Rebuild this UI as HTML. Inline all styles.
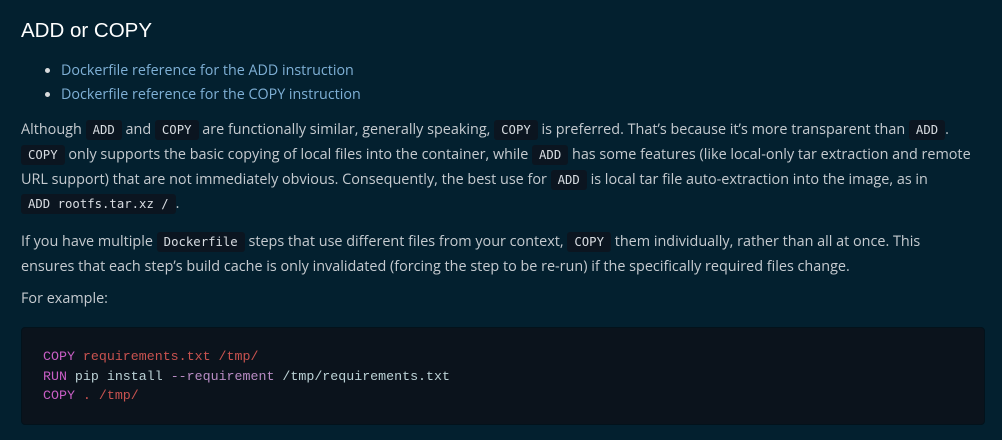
<!DOCTYPE html>
<html><head><style>
html,body{margin:0;padding:0}
body{background:#03202f;width:1002px;height:440px;overflow:hidden;font-family:"Open Sans","DejaVu Sans","Liberation Sans",sans-serif;color:#c6cbd0;font-size:14px;position:relative}
h1{font-family:"Liberation Sans",sans-serif;font-weight:normal;color:#fff;font-size:20.5px;margin:0;position:absolute;top:19px;left:21px}
ul{position:absolute;top:59px;left:21px;margin:0;padding-left:40px;line-height:24px;color:#7fb0d6;font-size:14.3px}
ul li::marker{color:#d8dadc}
p{position:absolute;left:21px;width:962px;margin:0;line-height:24.8px;font-size:14.4px}
code{font-family:"DejaVu Sans Mono",monospace;font-size:12.3px;background:#0b1520;color:#d8dde2;padding:3px 7px;border-radius:3px;white-space:nowrap}
.cb{position:absolute;top:327px;left:21px;width:964px;height:98px;background:#0b131c;border:1px solid #03121b;border-radius:4px;box-sizing:border-box;overflow:hidden}
pre{margin:0;padding:19px 21px;font-family:"Liberation Mono",monospace;font-size:13.3px;line-height:19.5px;color:#bcd2d6}
.k{color:#c85ec4}.s{color:#c8524f}.o{color:#b98cc4}
</style></head><body>
<h1>ADD or COPY</h1>
<ul><li>Dockerfile reference for the ADD instruction</li><li>Dockerfile reference for the COPY instruction</li></ul>
<p style="top:118px">Although <code>ADD</code> and <code>COPY</code> are functionally similar, generally speaking, <code>COPY</code> is preferred. That’s because it’s more transparent than <code>ADD</code>. <code>COPY</code> only supports the basic copying of local files into the container, while <code>ADD</code> has some features (like local-only tar extraction and remote URL support) that are not immediately obvious. Consequently, the best use for <code>ADD</code> is local tar file auto-extraction into the image, as in <code>ADD rootfs.tar.xz /</code>.</p>
<p style="top:230px;width:955px">If you have multiple <code>Dockerfile</code> steps that use different files from your context, <code>COPY</code> them individually, rather than all at once. This ensures that each step’s build cache is only invalidated (forcing the step to be re-run) if the specifically required files change.</p>
<p style="top:287px">For example:</p>
<div class="cb"><pre><span class="k">COPY</span> <span class="s">requirements.txt /tmp/</span>
<span class="k">RUN</span> pip install <span class="o">--requirement</span> /tmp/requirements.txt
<span class="k">COPY</span> <span class="s">. /tmp/</span></pre></div>
</body></html>
